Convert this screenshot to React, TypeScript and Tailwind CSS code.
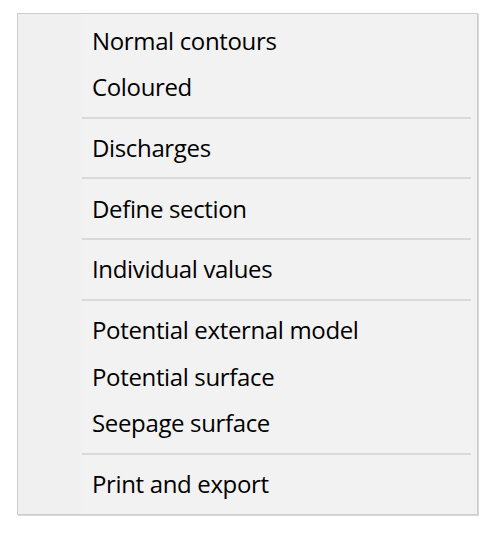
import React from "react";

type Entry = { t: "item"; label: string } | { t: "sep" };

const entries: Entry[] = [
  { t: "item", label: "Normal contours" },
  { t: "item", label: "Coloured" },
  { t: "sep" },
  { t: "item", label: "Discharges" },
  { t: "sep" },
  { t: "item", label: "Define section" },
  { t: "sep" },
  { t: "item", label: "Individual values" },
  { t: "sep" },
  { t: "item", label: "Potential external model" },
  { t: "item", label: "Potential surface" },
  { t: "item", label: "Seepage surface" },
  { t: "sep" },
  { t: "item", label: "Print and export" },
];

export default function App() {
  return (
    <div className="w-[490px] h-[547px] bg-white pt-[13px] pl-[17px]">
      <div className="w-[461px] h-[502px] border border-[#cccccc] bg-[#f2f2f2] shadow-[1px_1px_0_#d9d9d9] relative flex">
        <div className="w-[64px] bg-[#f0f0f0] shrink-0" />
        <div className="flex-1 flex flex-col pt-[3.3px] pb-[6px]">
          {entries.map((e, i) =>
            e.t === "sep" ? (
              <div key={i} className="h-[14px] flex items-center pr-[6px]">
                <div className="h-[2px] w-full bg-[#d9d9d9]" />
              </div>
            ) : (
              <div
                key={i}
                className="h-[46.7px] flex items-center pl-[10px] text-[24px] tracking-[-0.35px] text-black"
                style={{ fontFamily: '"Open Sans", sans-serif' }}
              >
                {e.label}
              </div>
            )
          )}
        </div>
      </div>
    </div>
  );
}
